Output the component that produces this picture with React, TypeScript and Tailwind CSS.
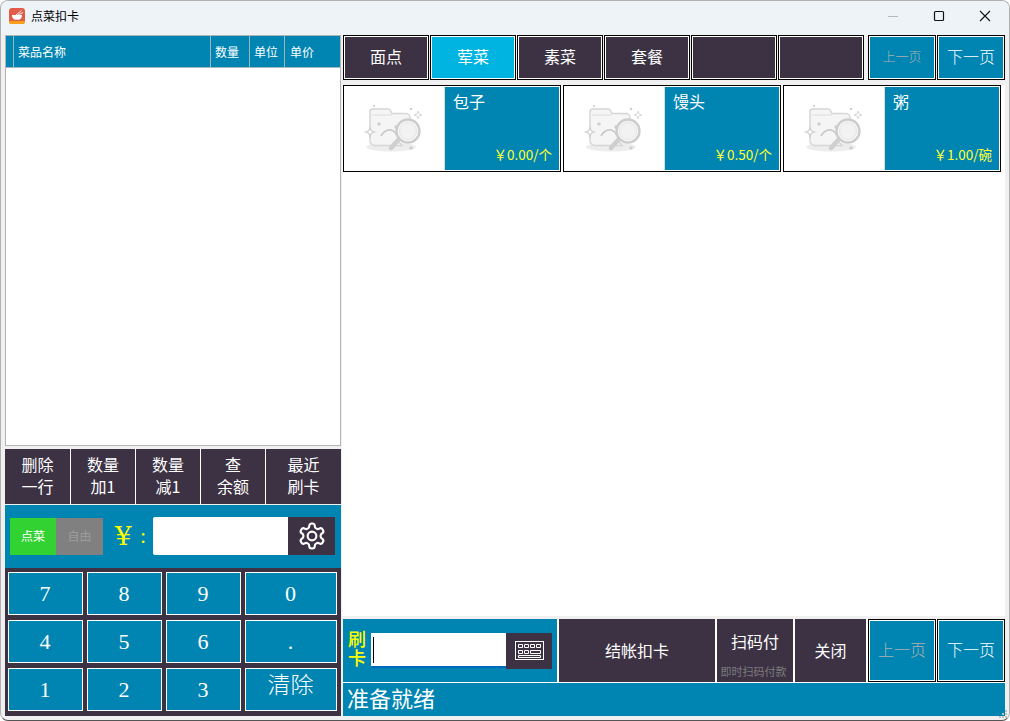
import React from "react";

const sans = "font-['Noto_Sans_CJK_SC','Microsoft_YaHei',sans-serif]";

function Folder() {
  return (
    <svg width="60" height="50" viewBox="0 0 60 50" fill="none">
      <defs>
        <filter id="soft" x="-10%" y="-10%" width="120%" height="120%">
          <feGaussianBlur stdDeviation="0.35" />
        </filter>
      </defs>
      <g filter="url(#soft)">
        <ellipse cx="27" cy="44" rx="25" ry="4.500" fill="#ededed" />
        <path d="M6 9 a3 3 0 0 1 3-3 h15 a3 3 0 0 1 2.500 1.500 l1.500 3 h14 a4 4 0 0 1 4 4 v4 a14 14 0 0 0-8 24 H11 a5 5 0 0 1-5-5 Z" fill="#f5f5f5" stroke="#d6d6d6" strokeWidth="1.500" />
        <path d="M8 12 H28" stroke="#e2e2e2" strokeWidth="1.200" />
        <path d="M17 33 q4-7 10-6 q4 1 6 6" stroke="#c8c8c8" strokeWidth="1.500" fill="none" />
        <circle cx="15" cy="21" r="1.800" fill="#d0d0d0" />
        <circle cx="32" cy="24" r="1.800" fill="#d0d0d0" />
        <circle cx="47" cy="6" r="1.300" fill="#d0d0d0" />
        <circle cx="47" cy="45" r="1.800" fill="#d0d0d0" />
        <circle cx="10" cy="3" r="1.200" fill="#d8d8d8" />
        <path d="M6 24.500 l1.300 3.200 3.200 1.300 -3.200 1.300 L6 33.500 l-1.300-3.200 -3.200-1.300 3.200-1.300 Z" fill="#fff" stroke="#d0d0d0" strokeWidth="1.200" />
        <path d="M54 8 l1 3 3 1 -3 1 -1 3 -1-3 -3-1 3-1 Z" fill="#fff" stroke="#dadada" />
        <path d="M35 36 L27 45" stroke="#cfcfcf" strokeWidth="4.500" strokeLinecap="round" />
        <circle cx="44" cy="28" r="11.500" fill="#f8f8f8" stroke="#cdcdcd" strokeWidth="2.400" />
        <circle cx="44" cy="28" r="8.500" fill="#f2f2f2" stroke="#e4e4e4" strokeWidth="1" />
      </g>
    </svg>
  );
}

function Logo() {
  return (
    <svg width="16" height="16" viewBox="0 0 16 16" className="shrink-0">
      <rect width="16" height="16" rx="3" fill="#e05c48" />
      <path d="M0 13 h16 v0.500 a2.500 2.500 0 0 1-2.500 2.500 h-11 A2.500 2.500 0 0 1 0 13.500 Z" fill="#f9a01b" />
      <path d="M3 7 h10 a5 5 0 0 1-3 4.800 H6 a5 5 0 0 1-3-4.800 Z" fill="#fff" />
      <path d="M7 7 L12.500 2.500 M9 7 L14 4.500" stroke="#fff" strokeWidth="0.900" />
    </svg>
  );
}

function Tab({ label, active }: { label?: string; active?: boolean }) {
  return (
    <div className="h-[45px] w-[86px] border border-black bg-white p-px">
      <div className={`flex h-full items-center justify-center pb-[3px] text-[16px] text-white ${active ? "bg-[#00b4e1]" : "bg-[#3c3244]"}`}>{label}</div>
    </div>
  );
}

function Pager({ label, dim, h, small }: { label: string; dim?: boolean; h: string; small?: boolean }) {
  return (
    <div className={`${h} w-[68px] border border-black bg-white p-px`}>
      <div className={`flex h-full items-center justify-center bg-[#0085b2] pb-[4px] font-light ${dim ? "text-[#b0b0b0]" : "text-white"} ${small ? "text-[13px]" : "text-[16px]"}`}>{label}</div>
    </div>
  );
}

function Card({ name, price }: { name: string; price: string }) {
  return (
    <div className="flex h-[87px] w-[218px] border border-black bg-white p-px">
      <div className="flex w-[99px] items-center justify-center pb-[1px] pr-[1px]"><Folder /></div>
      <div className="flex flex-1 flex-col justify-between border-l border-[#d4dfd8] bg-[#0085b2] pb-[6px] pl-2 pr-[7px] pt-[2px]">
        <div className="text-[16px] leading-[24px] text-white">{name}</div>
        <div className="text-right text-[13.500px] leading-[20px] text-[#ffff33]">{price}</div>
      </div>
    </div>
  );
}

function ActionBtn({ a, b, w }: { a: string; b: string; w: string }) {
  return (
    <div className={`${w} flex h-full flex-col items-center justify-center border-r border-white pb-[3px] text-[16px] leading-[22px] text-white last:border-r-0`}>
      <span>{a}</span>
      <span>{b}</span>
    </div>
  );
}

function Key({ label, w, up }: { label: string; w: string; up?: boolean }) {
  return (
    <div className={`${w} flex h-[43px] items-center justify-center border border-white bg-[#0085b2] pr-px font-['Liberation_Serif','Noto_Sans_CJK_SC',serif] font-light text-white ${up ? "pb-[6px] text-[23px]" : "pb-px text-[22px]"}`}>
      {label}
    </div>
  );
}

export default function App() {
  return (
    <div className="relative h-[721px] w-[1010px] overflow-hidden bg-white">
      <div className={`flex h-[721px] w-[1010px] flex-col overflow-hidden rounded-[8px] border border-[#b0b0b0] border-b-[#555555] bg-[#f0f0f0] ${sans}`}>
        <div className="flex h-[34px] shrink-0 items-center bg-[#eef3f8] pb-[5px] pl-[8px]">
          <Logo />
          <span className="ml-[6px] text-[12px] text-black">点菜扣卡</span>
          <div className="ml-auto flex items-center">
            <svg width="46" height="30" viewBox="0 0 46 30"><path d="M18 15.500 H28" stroke="#b4b8bb" /></svg>
            <svg width="46" height="30" viewBox="0 0 46 30"><rect x="18.500" y="10.500" width="9" height="9" rx="1" fill="none" stroke="#111" strokeWidth="1.200" /></svg>
            <svg width="46" height="30" viewBox="0 0 46 30" className="mr-[1px]"><path d="M18 10 L28 20 M28 10 L18 20" stroke="#111" strokeWidth="1.100" /></svg>
          </div>
        </div>

        <div className="flex min-h-0 flex-1 pl-[4px]">
          <div className="flex w-[336px] flex-col">
            <div className="h-[411px] border border-[#b4b4b4] bg-white">
              <div className="flex h-[32px] border-b border-[#a8b8c0] bg-[#0085b2] text-[12px] text-white">
                <div className="w-[8px] border-r border-[#a0b4bc]" />
                <div className="flex w-[197px] items-center border-r border-[#a0b4bc] pl-[4px]">菜品名称</div>
                <div className="flex w-[39px] items-center border-r border-[#a0b4bc] pl-[4px]">数量</div>
                <div className="flex w-[35px] items-center border-r border-[#a0b4bc] pl-[4px]">单位</div>
                <div className="flex flex-1 items-center pl-[5px]">单价</div>
              </div>
            </div>
            <div className="mt-[3px] flex h-[55px] bg-[#3c3244]">
              <ActionBtn a="删除" b="一行" w="w-[66px]" />
              <ActionBtn a="数量" b="加1" w="w-[65px]" />
              <ActionBtn a="数量" b="减1" w="w-[65px]" />
              <ActionBtn a="查" b="余额" w="w-[65px]" />
              <ActionBtn a="最近" b="刷卡" w="flex-1" />
            </div>
            <div className="mt-px flex h-[63px] items-center bg-[#0085b2] pb-[1px] pl-[5px]">
              <div className="flex h-[37px] w-[93px]">
                <div className="flex w-[46px] items-center justify-center bg-[#32d232] text-[12px] text-white">点菜</div>
                <div className="flex flex-1 items-center justify-center bg-[#808080] text-[12px] text-[#9c9c9c]">自由</div>
              </div>
              <span className="ml-[12px] w-[25px] font-['DejaVu_Serif',serif] text-[26px] font-light leading-none text-[#ffff00]">¥</span>
              <span className="w-[13px] font-['Liberation_Serif',serif] text-[22px] leading-none text-[#ffff00]">:</span>
              <div className="h-[38px] w-[135px] rounded-l-[2px] bg-white" />
              <div className="flex h-[38px] w-[47px] items-center justify-center bg-[#3c3244]">
                <svg width="30" height="30" viewBox="0 0 24 24" fill="none" stroke="#fff" strokeWidth="1.700" strokeLinejoin="round">
                  <path d="M12.220 2h-.44a2 2 0 0 0-2 2v.18a2 2 0 0 1-1 1.730l-.43.250a2 2 0 0 1-2 0l-.15-.08a2 2 0 0 0-2.730.730l-.22.380a2 2 0 0 0 .730 2.730l.15.1a2 2 0 0 1 1 1.720v.51a2 2 0 0 1-1 1.740l-.15.09a2 2 0 0 0-.730 2.730l.22.380a2 2 0 0 0 2.730.730l.15-.08a2 2 0 0 1 2 0l.43.250a2 2 0 0 1 1 1.730V20a2 2 0 0 0 2 2h.44a2 2 0 0 0 2-2v-.18a2 2 0 0 1 1-1.730l.43-.250a2 2 0 0 1 2 0l.15.08a2 2 0 0 0 2.730-.730l.22-.390a2 2 0 0 0-.730-2.730l-.15-.08a2 2 0 0 1-1-1.740v-.5a2 2 0 0 1 1-1.740l.15-.09a2 2 0 0 0 .730-2.730l-.22-.380a2 2 0 0 0-2.730-.730l-.15.08a2 2 0 0 1-2 0l-.43-.250a2 2 0 0 1-1-1.730V4a2 2 0 0 0-2-2z" />
                  <circle cx="12" cy="12" r="3.500" />
                </svg>
              </div>
            </div>
            <div className="flex h-[148px] flex-col gap-[5px] bg-[#3c3244] px-[3px] pt-[4px]">
              <div className="flex gap-[4px]">
                <Key label="7" w="w-[75px]" /><Key label="8" w="w-[75px]" /><Key label="9" w="w-[75px]" /><Key label="0" w="w-[92px]" />
              </div>
              <div className="flex gap-[4px]">
                <Key label="4" w="w-[75px]" /><Key label="5" w="w-[75px]" /><Key label="6" w="w-[75px]" /><Key label="." w="w-[92px]" />
              </div>
              <div className="flex gap-[4px]">
                <Key label="1" w="w-[75px]" /><Key label="2" w="w-[75px]" /><Key label="3" w="w-[75px]" /><Key label="清除" w="w-[92px]" up />
              </div>
            </div>
          </div>

          <div className="ml-[1px] flex w-[663px] flex-col">
            <div className="flex h-[50px] shrink-0 items-start pl-px">
              <div className="flex gap-px">
                <Tab label="面点" />
                <Tab label="荤菜" active />
                <Tab label="素菜" />
                <Tab label="套餐" />
                <Tab />
                <Tab />
              </div>
              <div className="ml-[4px] flex gap-px">
                <Pager label="上一页" dim h="h-[45px]" small />
                <Pager label="下一页" h="h-[45px]" />
              </div>
            </div>
            <div className="h-[531px] shrink-0 bg-white pl-px">
              <div className="flex gap-[2px]">
                <Card name="包子" price="￥0.00/个" />
                <Card name="馒头" price="￥0.50/个" />
                <Card name="粥" price="￥1.00/碗" />
              </div>
            </div>
            <div className="ml-px mt-[3px] flex h-[63px] shrink-0 gap-[2px] bg-white">
              <div className="flex w-[214px] items-center bg-[#0085b2] pl-[5px]">
                <div className="mb-[6px] w-[18px] text-[18px] font-medium leading-[19px] text-[#ffff00]">刷卡</div>
                <div className="ml-[5px] flex h-[35px] w-[135px] items-center border-b-2 border-[#0067c0] bg-white pl-[2px]">
                  <div className="h-[26px] w-px bg-black" />
                </div>
                <div className="flex h-[36px] w-[46px] items-center justify-center bg-[#3c3244]">
                  <svg width="29" height="19" viewBox="0 0 29 19" fill="none" stroke="#fff" strokeWidth="1">
                    <rect x="0.500" y="0.500" width="28" height="18" />
                    <path d="M3.500 3.500h4v3h-4zM9.500 3.500h4v3h-4zM15.500 3.500h4v3h-4zM21.500 3.500h4v3h-4zM3.500 9.500h4v3h-4zM9.500 9.500h4v3h-4zM15.500 9.500h10v3h-10zM3.500 14.500h22v2h-22z" />
                  </svg>
                </div>
              </div>
              <div className="flex w-[156px] items-center justify-center bg-[#3c3244] pb-[2px] text-[16px] text-white">结帐扣卡</div>
              <div className="flex w-[76px] flex-col items-center bg-[#3c3244] pt-[10px]">
                <span className="text-[16px] leading-[24px] text-white">扫码付</span>
                <span className="-ml-[3px] mt-[10px] text-[11px] leading-[16px] text-[#7c7c7c]">即时扫码付款</span>
              </div>
              <div className="flex w-[71px] items-center justify-center bg-[#3c3244] pb-px text-[16px] text-white">关闭</div>
              <div className="flex gap-px">
                <Pager label="上一页" dim h="h-[63px]" />
                <Pager label="下一页" h="h-[63px]" />
              </div>
            </div>
            <div className="ml-px flex h-[34px] shrink-0 items-center border-t border-white bg-[#0085b2] pb-[4px] pl-[4px] text-[22px] text-white">准备就绪</div>
          </div>
        </div>
      </div>
      <svg width="10" height="10" viewBox="0 0 10 10" fill="#c4c4c4" className="absolute bottom-[2px] right-[2px]">
        <rect x="7" y="1" width="2" height="2" />
        <rect x="4" y="4" width="2" height="2" />
        <rect x="7" y="4" width="2" height="2" />
        <rect x="1" y="7" width="2" height="2" />
        <rect x="4" y="7" width="2" height="2" />
        <rect x="7" y="7" width="2" height="2" />
      </svg>
    </div>
  );
}
